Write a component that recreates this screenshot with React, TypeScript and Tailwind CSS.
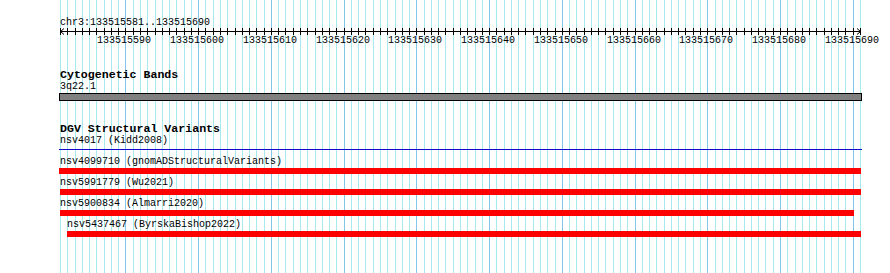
import React from "react";

const N = 110;
const X0 = 60;
const STEP = 800 / 110;
const xs = Array.from({ length: N + 1 }, (_, i) => Math.round(X0 + i * STEP));
const majors = [9, 19, 29, 39, 49, 59, 69, 79, 89, 99, 109];
const start = 133515581;

function Grid() {
  return (
    <svg className="absolute inset-0" width={890} height={273} shapeRendering="crispEdges">
      {xs.map((x, i) => (
        <line
          key={i}
          x1={x + 0.5}
          x2={x + 0.5}
          y1={0}
          y2={273}
          stroke={majors.includes(i) ? "#82c6ea" : "#a6eaf0"}
          strokeWidth={1}
        />
      ))}
    </svg>
  );
}

function Ruler() {
  return (
    <div className="relative h-[18px] w-full">
      <svg className="absolute left-0 top-0" width={890} height={8} shapeRendering="crispEdges">
        <line x1={60} x2={861} y1={3.5} y2={3.5} stroke="#000" strokeWidth={1} />
        {xs.map((x, i) => (
          <line key={i} x1={x + 0.5} x2={x + 0.5} y1={0} y2={7} stroke="#000" strokeWidth={1} />
        ))}
        <polyline points="64,0.5 60.5,3.5 64,6.5" fill="none" stroke="#000" strokeWidth={1} shapeRendering="auto" />
        <polyline points="857,0.5 860.5,3.5 857,6.5" fill="none" stroke="#000" strokeWidth={1} shapeRendering="auto" />
      </svg>
      {majors.map((i) => (
        <span
          key={i}
          className="absolute top-[7px] text-[10px] leading-[11px] text-black whitespace-nowrap"
          style={{ left: xs[i] - 28 }}
        >
          {start + i}
        </span>
      ))}
    </div>
  );
}

const mono = "font-['Liberation_Mono','DejaVu_Sans_Mono',monospace]";

function Label({ children, className = "" }: { children: React.ReactNode; className?: string }) {
  return <div className={`text-[10px] leading-[11px] h-[11px] text-black whitespace-nowrap ${className}`}>{children}</div>;
}

function Title({ children, className = "" }: { children: React.ReactNode; className?: string }) {
  return (
    <div className={`text-[11.6px] leading-[13px] h-[13px] font-bold text-black whitespace-nowrap ${className}`}>
      {children}
    </div>
  );
}

export default function App() {
  return (
    <div className={`relative w-[890px] h-[273px] bg-white overflow-hidden ${mono}`}>
      <Grid />
      <div className="relative flex flex-col">
        <Label className="mt-[17px] ml-[60px]">chr3:133515581..133515690</Label>
        <Ruler />

        <Title className="mt-[22px] ml-[60px]">Cytogenetic Bands</Title>
        <Label className="ml-[60px]">3q22.1</Label>
        <div className="mt-[1px] ml-[59px] w-[803px] h-[8px] bg-[#808080] border border-black" />

        <Title className="mt-[21px] ml-[60px]">DGV Structural Variants</Title>
        <Label className="ml-[60px]">nsv4017 (Kidd2008)</Label>
        <div className="mt-[3px] ml-[59px] w-[803px] h-[1px] bg-[#0a0ac8]" />

        <Label className="mt-[6px] ml-[60px]">nsv4099710 (gnomADStructuralVariants)</Label>
        <div className="mt-[1px] ml-[59px] w-[802px] h-[6px] bg-[#ff0000]" />

        <Label className="mt-[3px] ml-[60px]">nsv5991779 (Wu2021)</Label>
        <div className="mt-[1px] ml-[60px] w-[801px] h-[6px] bg-[#ff0000]" />

        <Label className="mt-[3px] ml-[60px]">nsv5900834 (Almarri2020)</Label>
        <div className="mt-[1px] ml-[60px] w-[794px] h-[6px] bg-[#ff0000]" />

        <Label className="mt-[3px] ml-[67px]">nsv5437467 (ByrskaBishop2022)</Label>
        <div className="mt-[1px] ml-[67px] w-[794px] h-[6px] bg-[#ff0000]" />
      </div>
    </div>
  );
}
